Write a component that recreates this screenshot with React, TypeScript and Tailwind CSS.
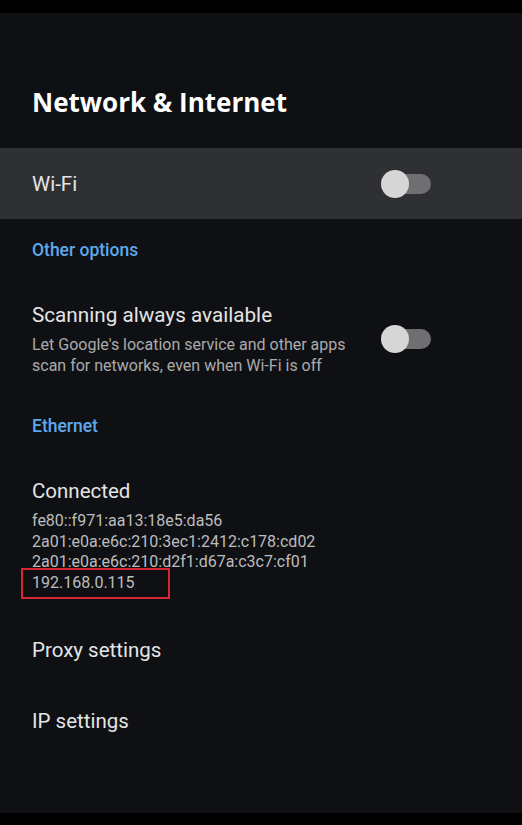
import React from "react";

function Toggle() {
  return (
    <div className="relative w-[50px] h-[28px] flex items-center">
      <div className="absolute left-[2px] right-0 h-[20px] rounded-full bg-[#6f6f72]" />
      <div className="relative w-[28px] h-[28px] rounded-full bg-[#d6d6d6]" />
    </div>
  );
}

const addresses = [
  "fe80::f971:aa13:18e5:da56",
  "2a01:e0a:e6c:210:3ec1:2412:c178:cd02",
  "2a01:e0a:e6c:210:d2f1:d67a:c3c7:cf01",
];

export default function App() {
  return (
    <div className="flex flex-col h-[825px] w-[522px] bg-black font-['Roboto',sans-serif] overflow-hidden">
      <div className="h-[13px] bg-black" />

      <div className="flex-1 flex flex-col bg-[#0f1014]">
        <h1 className="pt-[73px] pl-[32px] text-[26px] leading-[33px] font-bold text-white font-['Open_Sans',sans-serif]">
          Network &amp; Internet
        </h1>

        <div className="mt-[29px] h-[71px] bg-[#2f3034] flex items-center justify-between pl-[32px] pr-[91px]">
          <span className="text-[20.5px] leading-[28px] text-[#e4e4e4]">Wi-Fi</span>
          <Toggle />
        </div>

        <p className="mt-[21px] pl-[32px] text-[17.5px] leading-[20px] font-medium text-[#5ea9ee]">
          Other options
        </p>

        <div className="mt-[41px] flex items-center justify-between pl-[32px] pr-[91px]">
          <div>
            <p className="text-[20.7px] leading-[28px] text-[#e4e4e4]">Scanning always available</p>
            <p className="mt-[5px] text-[16px] leading-[21px] text-[#ababab] w-[330px]">
              Let Google's location service and other apps scan for networks, even when Wi-Fi is off
            </p>
          </div>
          <Toggle />
        </div>

        <p className="mt-[40px] pl-[32px] text-[17.5px] leading-[20px] font-medium text-[#5ea9ee]">
          Ethernet
        </p>

        <p className="mt-[41px] pl-[32px] text-[20.5px] leading-[28px] text-[#e4e4e4]">Connected</p>
        <div className="mt-[6px] pl-[32px] text-[16px] leading-[20.5px] text-[#bdbdbd]">
          {addresses.map((a) => (
            <p key={a}>{a}</p>
          ))}
          <p className="relative">
            192.168.0.115
            <span className="absolute left-[-11px] top-[-5px] w-[149px] h-[31px] border-2 border-[#d6262f]" />
          </p>
        </div>

        <p className="mt-[43px] pl-[32px] text-[20.5px] leading-[28px] text-[#e4e4e4]">Proxy settings</p>
        <p className="mt-[43px] pl-[32px] text-[20.5px] leading-[28px] text-[#e4e4e4]">IP settings</p>
      </div>

      <div className="h-[12px] bg-black" />
    </div>
  );
}
